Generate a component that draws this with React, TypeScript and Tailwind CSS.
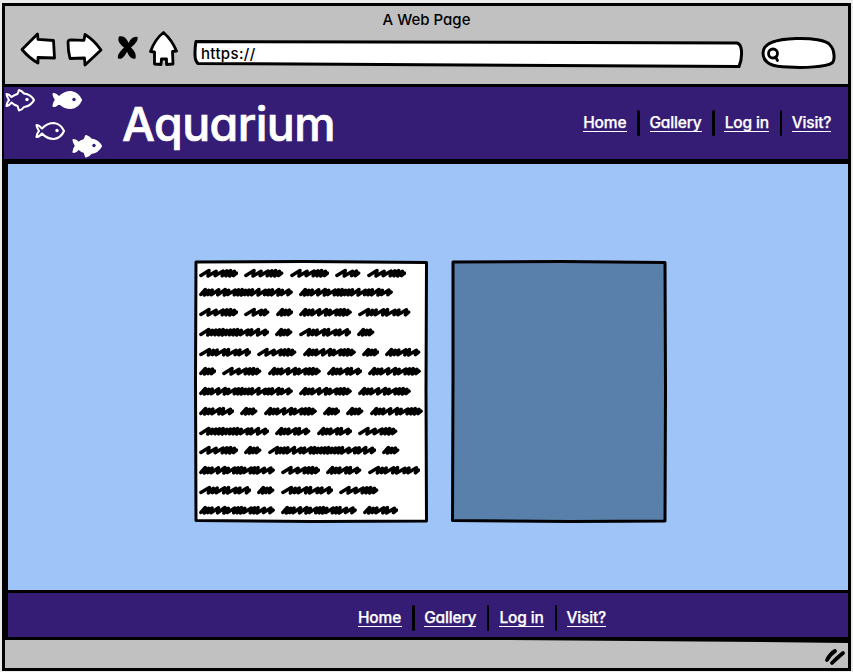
import React from "react";

const LINKS = [
  { label: "Home", width: "w-[44px]" },
  { label: "Gallery", width: "w-[52px]" },
  { label: "Log in", width: "w-[45px]" },
  { label: "Visit?", width: "w-[39px]" },
];

function NavLinks() {
  return (
    <nav className="flex items-center">
      {LINKS.map((link, i) => (
        <React.Fragment key={link.label}>
          {i > 0 && <span className="mr-[9.75px] ml-[10.5px] h-[26px] w-[2.5px] rounded-sm bg-black" />}
          <a
            className={`flex h-[17px] justify-center border-b border-white text-[15.5px] leading-[16px] font-medium tracking-[-0.15px] whitespace-nowrap text-white [-webkit-text-stroke:0.25px_white] ${link.width}`}
          >
            {link.label}
          </a>
        </React.Fragment>
      ))}
    </nav>
  );
}

// Each letter is one pen stroke: "s" is a wide stroke, "d" a tight one.
const WORDS: Record<string, { width: number; strokes: string }> = {
  a: { width: 39.5, strokes: "sssddd" },
  b: { width: 25.5, strokes: "ssd" },
  c: { width: 17.5, strokes: "ddd" },
  e: { width: 35.5, strokes: "dddsds" },
  f: { width: 53, strokes: "dddssdsddd" },
  g: { width: 52.5, strokes: "sddsdsds" },
  h: { width: 70.5, strokes: "sdddddddddsdss" },
  i: { width: 76, strokes: "dddssdsdddsddss" },
  j: { width: 94, strokes: "dddssdsdddddssddsds" },
  k: { width: 108.5, strokes: "sdddssdsdddddddddssdss" },
};

const LINES = [
  "aaaba", "jj", "abcfg", "hcgc", "gafce", "cafef", "jff",
  "ecfccf", "heea", "ackc", "iaeg", "gcga", "iie",
];

function Scribble({ kind }: { kind: string }) {
  const { width, strokes } = WORDS[kind];
  const weights = strokes.split("").map((s) => (s === "s" ? 1.9 : 1));
  const total = weights.reduce((a, b) => a + b, 0);
  const unit = (width - 7) / total;
  let x = 1.9;
  let d = `M${x} 7.4`;
  weights.forEach((weight, i) => {
    const wobble = ((i * 7) % 4) * 0.25;
    const end = x + weight * unit;
    d += ` L${end + 1} ${2.5 + wobble} L${end} ${8 - wobble * 0.5}`;
    x = end;
  });
  d += ` L${width - 1.9} 5.2`;
  return (
    <svg width={width} height="11" viewBox={`0 0 ${width} 11`} className="shrink-0">
      <path d={d} fill="none" stroke="black" strokeWidth="3.5" strokeLinecap="round" strokeLinejoin="round" />
    </svg>
  );
}

function Fish({ filled, spiky }: { filled: boolean; spiky: boolean }) {
  const body = spiky
    ? "M1.5 6 Q4 6 6.5 9 Q9 7 12.5 6 L14 2 Q17 3 19 5.5 Q26 6.5 29 12 Q26 18 19 19 Q17 22 14 22.5 L12.5 18 Q9 17 6.5 14.5 Q4 18 1.5 18 Q2 14 4 12 Q2 9 1.5 6Z"
    : "M1.5 6 Q4 6 7 9.5 Q12 4 19 4 Q26 5 29 12 Q26 19 19 20 Q12 20 7 14.5 Q4 18 1.5 18 Q2 14 4 12 Q2 9 1.5 6Z";
  return (
    <svg width="31" height="24" viewBox="0 0 31 24">
      <path d={body} fill={filled ? "white" : "none"} stroke="white" strokeWidth="2.1" strokeLinejoin="round" />
      <circle cx="22" cy="11.5" r="1.7" fill={filled ? "#351d75" : "white"} />
    </svg>
  );
}

function FishLogo() {
  return (
    <div className="h-[72px] w-[100px]">
      <div className="flex h-[24px] gap-[16px] pt-[1px] pl-[0.5px]">
        <Fish filled={false} spiky />
        <Fish filled spiky={false} />
      </div>
      <div className="flex gap-[6.5px] pt-[8px] pl-[30.5px]">
        <Fish filled={false} spiky={false} />
        <div className="pt-[15px]">
          <Fish filled spiky />
        </div>
      </div>
    </div>
  );
}

function BrowserBar() {
  return (
    <header className="h-[81px] border-b-3 border-black bg-[#c1c1c1]">
      <div className="flex h-[27px] items-center justify-center pt-[1px] text-[15px] font-medium">
        A Web Page
      </div>
      <div className="flex h-[36px] items-center pl-[15px]">
        <svg className="-mt-[4px]" width="36" height="34" viewBox="0 0 36 34" fill="white" stroke="black" strokeWidth="2.8" strokeLinejoin="round">
          <path d="M2 17.5 L17.5 2 L18 7.3 L33.5 8.5 L34.5 26 L18 25.5 L18 31 Q9 26 2 17.5Z" />
        </svg>
        <svg className="-mt-[3px] ml-[10px]" width="37" height="34" viewBox="0 0 37 34" fill="white" stroke="black" strokeWidth="2.8" strokeLinejoin="round">
          <path d="M2 9 Q2 7 5 6.8 L18 7.3 L19 1.5 Q28 7 35 17 L19 32 L18.5 25 L4 25.5 Q2 18 2 9Z" />
        </svg>
        <svg className="-mt-[6px] ml-[14px]" width="22" height="26" viewBox="0 0 22 26" fill="black">
          <path d="M2 1.5 C7 0 10 4 11.5 8 C14 3 17 1 20.5 2 C21.5 6 17 10 14 12.5 C18 16 19.5 20 18.5 23.5 C14 25 11.5 20 10 16.5 C8 21 5 25 1 23.5 C0 19 4 16 7 12.5 C3 9 0 6 2 1.5Z" />
        </svg>
        <svg className="-mt-[5px] ml-[10px]" width="29" height="35" viewBox="0 0 29 35" fill="white" stroke="black" strokeWidth="2.8" strokeLinejoin="round">
          <path d="M14.5 1.5 Q23 9 27.5 20 L23.5 20.5 L24 33 L17.5 33.5 L17.5 28 L12.5 28 L12 33.5 L5.5 33 L5.5 21 L1.5 20.5 Q6 8 14.5 1.5Z" />
        </svg>
        <div className="relative mt-[3px] ml-[15px] h-[30px] w-[552px]">
          <svg className="absolute inset-0" width="552" height="30" viewBox="0 0 552 30">
            <path d="M3 3.5 L544 5 Q548 6 548.5 13 Q549 22 546 28.5 Q260 27.5 5 25.5 Q2 23 2 17 Q2 8 3 3.5Z" fill="white" stroke="black" strokeWidth="3" strokeLinejoin="round" />
          </svg>
          <div className="relative pt-[5px] pl-[8px] text-[15px] leading-[21px] font-medium tracking-[0.35px]">https://</div>
        </div>
        <svg className="mt-[4px] ml-[15px]" width="76" height="34" viewBox="0 0 76 34">
          <path d="M3 17 C3 7 18 3 36 2.5 C51 2 67 4 70 9 C75 14 75 25 72 27 C66 31 44 32 28 31 C12 31 3 27 3 17Z" fill="white" stroke="black" strokeWidth="3" />
          <circle cx="13" cy="17.5" r="4.5" fill="white" stroke="black" strokeWidth="2.8" />
          <path d="M15.5 21 L17.5 24.5" stroke="black" strokeWidth="2.8" strokeLinecap="round" />
        </svg>
      </div>
    </header>
  );
}

export default function App() {
  return (
    <div className="h-[672px] w-[853px] overflow-hidden bg-[#ebebeb] pt-[3px] pl-[2px] text-black [font-family:Inter,'Open_Sans',sans-serif] [font-feature-settings:'cv11']">
      <div className="flex h-[668px] w-[849px] flex-col border-3 border-black bg-[#c1c1c1]">
        <BrowserBar />
        <section className="-ml-px flex h-[72px] items-center justify-between bg-[#351d75]">
          <div className="flex items-center">
            <FishLogo />
            <h1 className="ml-[18px] pt-[1px] text-[46.5px] leading-[70px] font-medium tracking-[-0.6px] text-white [-webkit-text-stroke:0.7px_white]">Aquarium</h1>
          </div>
          <div className="pr-[17px]">
            <NavLinks />
          </div>
        </section>
        <main className="flex h-[434px] items-start gap-[22px] border-t-[5px] border-b-3 border-l-3 border-black bg-[#9fc5f8] pt-[96px] pl-[186px]">
          <article className="relative h-[263px] w-[235px]">
            <svg className="absolute inset-0" width="235" height="263" viewBox="0 0 235 263">
              <path d="M2 2 L110 1.5 L232.5 2.5 L232 130 L232.5 261 L120 261.5 L2 260.5 L1.5 120Z" fill="white" stroke="black" strokeWidth="3" strokeLinejoin="round" />
            </svg>
            <div className="relative flex flex-col gap-[8.77px] pt-[7.5px] pl-[4.5px]">
              {LINES.map((line, i) => (
                <div key={i} className="flex h-[11px] gap-[6px]">
                  {line.split("").map((kind, j) => (
                    <Scribble key={j} kind={kind} />
                  ))}
                </div>
              ))}
            </div>
          </article>
          <svg width="217" height="263" viewBox="0 0 217 263">
            <path d="M2 2 L110 1.5 L214 2.5 L214.5 130 L214 261 L120 261.5 L1.5 260.5 L2 120Z" fill="#5880ab" stroke="black" strokeWidth="3" strokeLinejoin="round" />
          </svg>
        </main>
        <section className="flex h-[47px] items-center border-b-3 border-l-3 border-black bg-[#351d75] pt-[6px] pl-[349.5px]">
          <NavLinks />
        </section>
        <footer className="flex h-[28px] justify-end">
          <svg width="843" height="28" viewBox="0 0 843 28">
            <path d="M500 0 L843 0 L843 3 Q670 1 500 0Z" fill="black" />
            <path d="M822 20 Q825 14 830 11 M827 23 Q832 18 838 13" fill="none" stroke="black" strokeWidth="3.8" strokeLinecap="round" />
          </svg>
        </footer>
      </div>
    </div>
  );
}
